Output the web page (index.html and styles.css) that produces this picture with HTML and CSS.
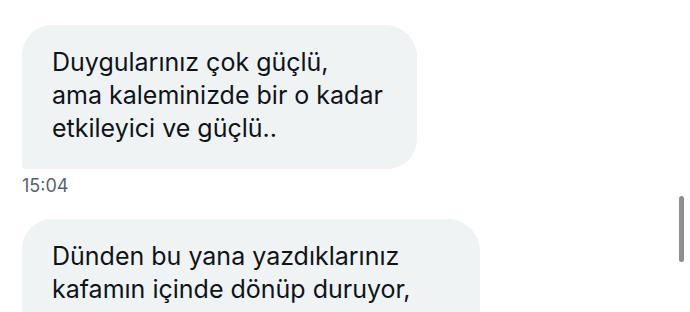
FILE: index.html
```html
<!DOCTYPE html>
<html lang="tr">
<head>
    <meta charset="UTF-8">
    <meta name="viewport" content="width=device-width, initial-scale=1.0">
    <title>Mesajlar</title>
    <link rel="stylesheet" href="styles.css">
</head>
<body>
    <div class="chat">
        <div class="message">
            <div class="bubble bubble-first">
                Duygularınız çok güçlü,<br>
                ama kaleminizde bir o kadar<br>
                etkileyici ve güçlü..
            </div>
            <div class="time">15:04</div>
        </div>
        <div class="message">
            <div class="bubble bubble-second">
                Dünden bu yana yazdıklarınız<br>
                kafamın içinde dönüp duruyor,
            </div>
        </div>
    </div>
    <div class="scrollbar"></div>
</body>
</html>
```

FILE: styles.css
```css
body {
    margin: 0;
    background-color: #ffffff;
    font-family: Inter, "Noto Sans", sans-serif;
    color: #0f1419;
    height: 312px;
    overflow: hidden;
}
.chat {
    padding: 25px 22px 0 22px;
}
.message {
    margin-bottom: 23px;
}
.bubble {
    background-color: #eff3f4;
    border-radius: 30px 32px 30px 4px;
    padding: 21px 30px 24px 30px;
    font-size: 25px;
    line-height: 33px;
    box-sizing: border-box;
}
.bubble-first {
    width: 395px;
}
.bubble-second {
    width: 458px;
    padding-bottom: 40px;
}
.time {
    margin-top: 7px;
    font-size: 18px;
    line-height: 20px;
    color: #536471;
}
.scrollbar {
    position: absolute;
    left: 679px;
    top: 196px;
    width: 5px;
    height: 66px;
    border-radius: 3px;
    background-color: #8e8e8e;
}
```
